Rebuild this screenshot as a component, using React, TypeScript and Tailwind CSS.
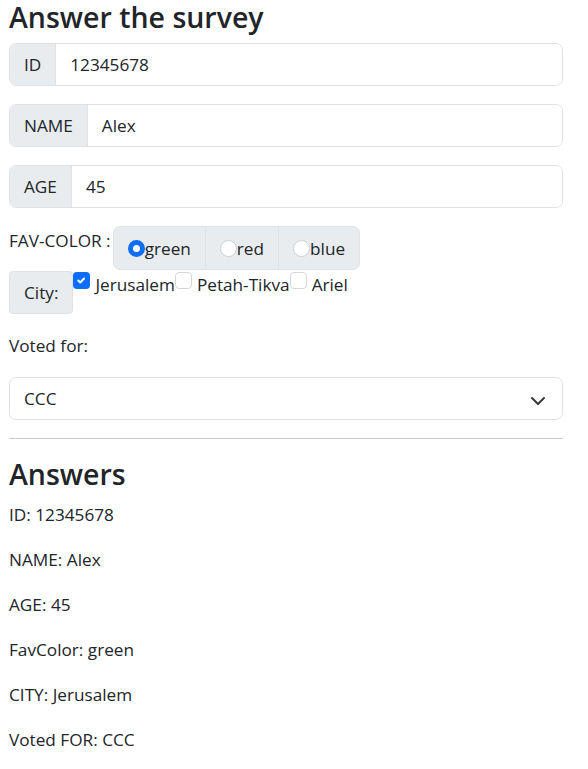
import React from "react";

const font = { fontFamily: '"Open Sans", "Noto Sans", sans-serif' };

function Group({ label, value }: { label: string; value: string }) {
  return (
    <div className="flex h-[43px] w-[554px] mb-[18px] rounded-[7px] border border-[#dee2e6] overflow-hidden">
      <div className="flex items-center bg-[#e9ecef] px-[14px] border-r border-[#dee2e6] text-[17.2px] text-[#212529]">
        {label}
      </div>
      <div className="flex items-center px-[14px] text-[17.2px] text-[#212529] bg-white flex-1">{value}</div>
    </div>
  );
}

function Radio({ checked }: { checked?: boolean }) {
  return checked ? (
    <span className="block w-[17px] h-[17px] min-w-[17px] rounded-full border-[5px] border-[#0d6efd] bg-white shrink-0" />
  ) : (
    <span className="block w-[17px] h-[17px] min-w-[17px] rounded-full border border-[#c9ced3] bg-white shrink-0" />
  );
}

function Check({ checked }: { checked?: boolean }) {
  return checked ? (
    <span className="flex items-center justify-center w-[17px] h-[17px] min-w-[17px] rounded-[4px] bg-[#0d6efd] shrink-0 mt-[1px]">
      <svg width="13" height="13" viewBox="0 0 20 20">
        <path fill="none" stroke="#fff" strokeLinecap="round" strokeLinejoin="round" strokeWidth="3" d="m5 10 3 3 6-6" />
      </svg>
    </span>
  ) : (
    <span className="block w-[17px] h-[17px] min-w-[17px] rounded-[4px] border border-[#d3d7db] bg-white shrink-0 mt-[1px]" />
  );
}

export default function App() {
  return (
    <div className="pl-[9px] text-[#212529] bg-white min-h-[769px]" style={font}>
      <h2 className="text-[28.5px] leading-[35px] font-semibold mb-[8px]">Answer the survey</h2>
      <Group label="ID" value="12345678" />
      <Group label="NAME" value="Alex" />
      <Group label="AGE" value="45" />

      <div className="flex items-start text-[17.2px] leading-[27px]">
        <span className="pt-[1px]">FAV-COLOR :</span>
        <div className="flex h-[44px] ml-[2px] rounded-[7px] border border-[#dee2e6] bg-[#e9ecef] overflow-hidden">
          <div className="flex items-center pl-[14px] pr-[14px]">
            <Radio checked />
            <span>green</span>
          </div>
          <div className="flex items-center pl-[14px] pr-[14px] border-l border-[#dee2e6]">
            <Radio />
            <span>red</span>
          </div>
          <div className="flex items-center pl-[14px] pr-[14px] border-l border-[#dee2e6]">
            <Radio />
            <span>blue</span>
          </div>
        </div>
      </div>

      <div className="flex items-start text-[17.2px] leading-[27px] mt-[1px]">
        <div className="flex items-center h-[43px] px-[14px] bg-[#e9ecef] border border-[#dee2e6] rounded-[4px]">City:</div>
        <div className="flex items-start">
          <Check checked />
          <span className="ml-[5px]">Jerusalem</span>
        </div>
        <div className="flex items-start">
          <Check />
          <span className="ml-[5px]">Petah-Tikva</span>
        </div>
        <div className="flex items-start">
          <Check />
          <span className="ml-[5px]">Ariel</span>
        </div>
      </div>

      <div className="text-[17.2px] leading-[27px] mt-[18px] mb-[18px]">Voted for:</div>

      <div className="flex items-center justify-between h-[43px] w-[554px] rounded-[7px] border border-[#dee2e6] pl-[14px] pr-[16px] text-[17.2px]">
        <span>CCC</span>
        <svg width="16" height="12" viewBox="0 0 16 12">
          <path fill="none" stroke="#343a40" strokeLinecap="round" strokeLinejoin="round" strokeWidth="2" d="m2 5 6 6 6-6" />
        </svg>
      </div>

      <hr className="w-[554px] my-[18px] border-0 border-t border-[#c8c9ca]" />

      <h2 className="text-[28.5px] leading-[35px] font-semibold mb-[9px]">Answers</h2>
      <div className="text-[17.2px] leading-[27px]">
        <p className="mb-[18px]">ID: 12345678</p>
        <p className="mb-[18px]">NAME: Alex</p>
        <p className="mb-[18px]">AGE: 45</p>
        <p className="mb-[18px]">FavColor: green</p>
        <p className="mb-[18px]">CITY: Jerusalem</p>
        <p className="mb-[18px]">Voted FOR: CCC</p>
      </div>
    </div>
  );
}
